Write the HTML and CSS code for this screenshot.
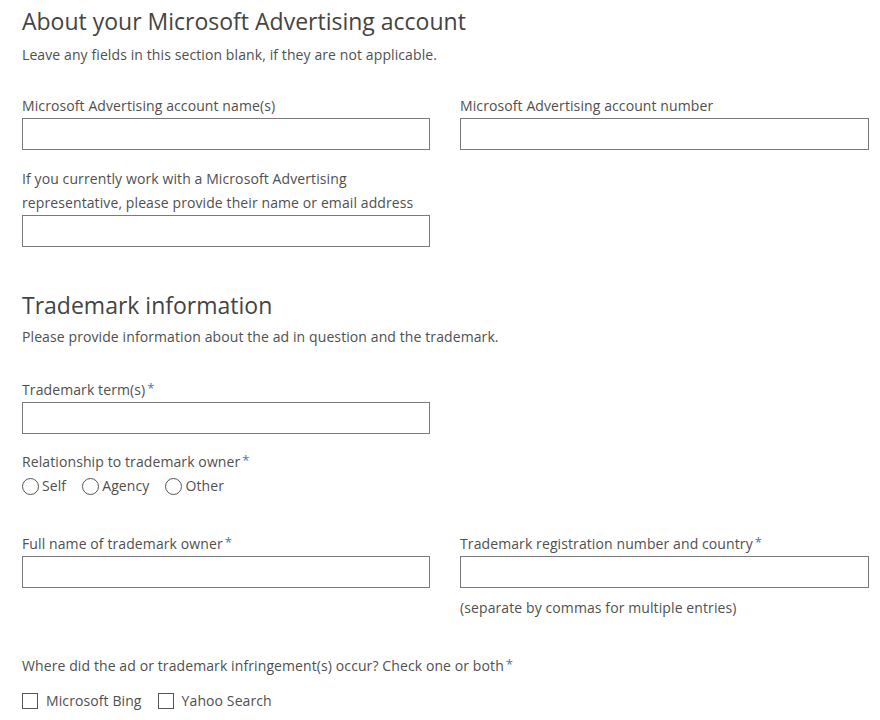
FILE: index.html
```html
<!DOCTYPE html>
<html lang="en">
<head>
<meta charset="utf-8">
<title>Microsoft Advertising trademark form</title>
<link rel="stylesheet" href="styles.css">
</head>
<body>
<main class="form">
  <section class="section section-account">
    <h2 class="title">About your Microsoft Advertising account</h2>
    <p class="desc">Leave any fields in this section blank, if they are not applicable.</p>
    <div class="grid first-grid">
      <div class="field">
        <label class="label">Microsoft Advertising account name(s)</label>
        <input class="input" type="text">
      </div>
      <div class="field">
        <label class="label">Microsoft Advertising account number</label>
        <input class="input" type="text">
      </div>
      <div class="field row-gap">
        <label class="label">If you currently work with a Microsoft Advertising<br>representative, please provide their name or email address</label>
        <input class="input" type="text">
      </div>
    </div>
  </section>

  <section class="section section-trademark">
    <h2 class="title">Trademark information</h2>
    <p class="desc">Please provide information about the ad in question and the trademark.</p>
    <div class="grid first-grid">
      <div class="field">
        <label class="label">Trademark term(s)<span class="req">*</span></label>
        <input class="input" type="text">
      </div>
      <div></div>
      <div class="field row-gap">
        <span class="label">Relationship to trademark owner<span class="req">*</span></span>
        <div class="choices radios">
          <label class="choice"><span class="radio"></span>Self</label>
          <label class="choice"><span class="radio"></span>Agency</label>
          <label class="choice"><span class="radio"></span>Other</label>
        </div>
      </div>
      <div></div>
      <div class="field row-gap-lg">
        <label class="label">Full name of trademark owner<span class="req">*</span></label>
        <input class="input" type="text">
      </div>
      <div class="field row-gap-lg">
        <label class="label">Trademark registration number and country<span class="req">*</span></label>
        <input class="input" type="text">
        <span class="help">(separate by commas for multiple entries)</span>
      </div>
    </div>
    <div class="field where">
      <span class="label">Where did the ad or trademark infringement(s) occur? Check one or both<span class="req">*</span></span>
      <div class="choices checks">
        <label class="choice check-choice"><span class="box"></span>Microsoft Bing</label>
        <label class="choice check-choice"><span class="box"></span>Yahoo Search</label>
      </div>
    </div>
  </section>
</main>
</body>
</html>
```
FILE: styles.css
```css
html, body {
  margin: 0;
  padding: 0;
  background: #ffffff;
}
body {
  font-family: "Open Sans", "Noto Sans", "Liberation Sans", sans-serif;
  color: #505050;
  font-size: 14px;
  letter-spacing: 0.1px;
}
.form {
  width: 847px;
  padding: 5px 0 0 22px;
}
.title {
  margin: 0;
  font-size: 23px;
  font-weight: 400;
  line-height: 32px;
  color: #444444;
  letter-spacing: 0;
}
.desc {
  margin: 5px 0 0;
  line-height: 24px;
  padding-top: 1px;
}
.section-trademark {
  margin-top: 42px;
}
.section-trademark .desc {
  margin-top: 3px;
}
.grid {
  display: grid;
  grid-template-columns: 408px 409px;
  column-gap: 30px;
}
.first-grid {
  margin-top: 26px;
}
.section-trademark .first-grid {
  margin-top: 28px;
}
.field {
  display: flex;
  flex-direction: column;
  align-items: flex-start;
}
.row-gap {
  margin-top: 15px;
}
.row-gap-lg {
  margin-top: 33px;
}
.section-account .row-gap {
  margin-top: 16px;
}
.label {
  line-height: 24px;
  padding-top: 1px;
}
.req {
  color: #3b78c8;
  font-size: 13px;
  vertical-align: 2px;
  margin-left: 2px;
  line-height: 0;
}
.input {
  box-sizing: border-box;
  width: 100%;
  height: 32px;
  margin: 0;
  border: 1px solid #7a7a7a;
  background: #fff;
  border-radius: 0;
  font: inherit;
}
.help {
  margin-top: 8px;
  line-height: 24px;
}
.choices {
  display: flex;
  align-items: center;
}
.radios {
  height: 24px;
  gap: 16px;
}
.choice {
  display: flex;
  align-items: center;
  line-height: 24px;
}
.radio {
  box-sizing: border-box;
  width: 17px;
  height: 17px;
  border: 1px solid #555;
  border-radius: 50%;
  margin-right: 3px;
}
.where {
  margin-top: 33px;
}
.checks {
  margin-top: 11px;
  height: 24px;
  gap: 16px;
}
.box {
  box-sizing: border-box;
  width: 16px;
  height: 16px;
  border: 1px solid #555;
  margin-right: 8px;
}
```
